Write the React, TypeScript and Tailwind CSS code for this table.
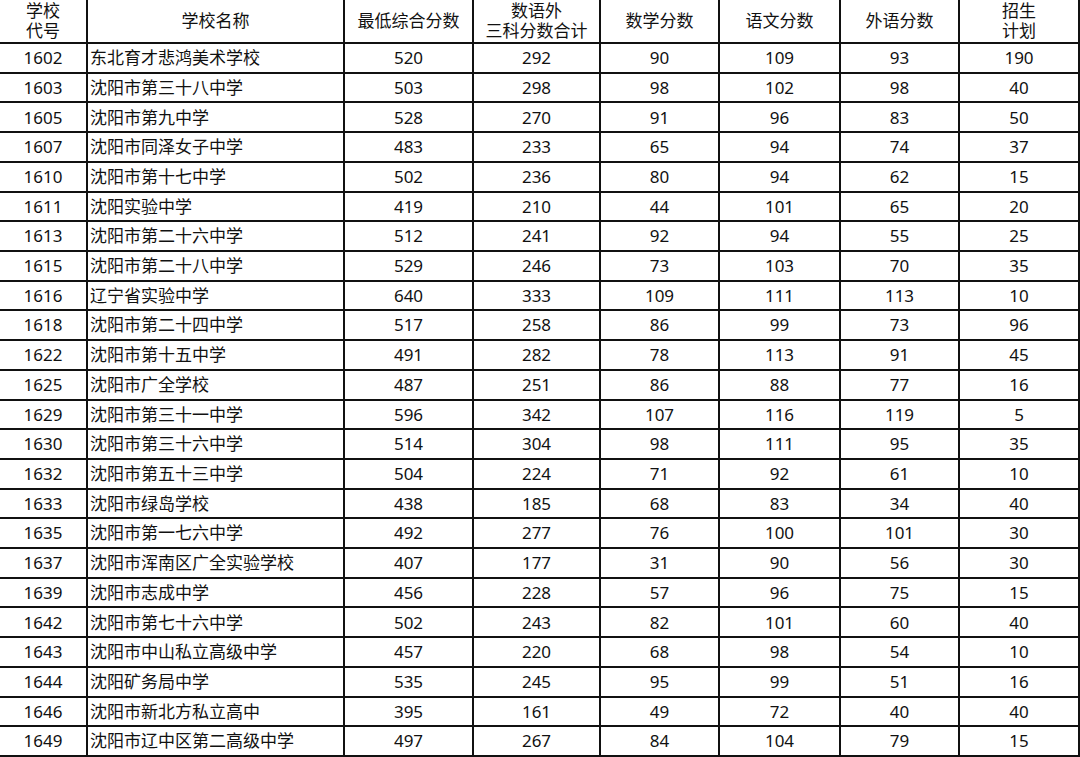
import React from "react";

const rows: [string, string, number, number, number, number, number, number][] = [
  ["1602", "东北育才悲鸿美术学校", 520, 292, 90, 109, 93, 190],
  ["1603", "沈阳市第三十八中学", 503, 298, 98, 102, 98, 40],
  ["1605", "沈阳市第九中学", 528, 270, 91, 96, 83, 50],
  ["1607", "沈阳市同泽女子中学", 483, 233, 65, 94, 74, 37],
  ["1610", "沈阳市第十七中学", 502, 236, 80, 94, 62, 15],
  ["1611", "沈阳实验中学", 419, 210, 44, 101, 65, 20],
  ["1613", "沈阳市第二十六中学", 512, 241, 92, 94, 55, 25],
  ["1615", "沈阳市第二十八中学", 529, 246, 73, 103, 70, 35],
  ["1616", "辽宁省实验中学", 640, 333, 109, 111, 113, 10],
  ["1618", "沈阳市第二十四中学", 517, 258, 86, 99, 73, 96],
  ["1622", "沈阳市第十五中学", 491, 282, 78, 113, 91, 45],
  ["1625", "沈阳市广全学校", 487, 251, 86, 88, 77, 16],
  ["1629", "沈阳市第三十一中学", 596, 342, 107, 116, 119, 5],
  ["1630", "沈阳市第三十六中学", 514, 304, 98, 111, 95, 35],
  ["1632", "沈阳市第五十三中学", 504, 224, 71, 92, 61, 10],
  ["1633", "沈阳市绿岛学校", 438, 185, 68, 83, 34, 40],
  ["1635", "沈阳市第一七六中学", 492, 277, 76, 100, 101, 30],
  ["1637", "沈阳市浑南区广全实验学校", 407, 177, 31, 90, 56, 30],
  ["1639", "沈阳市志成中学", 456, 228, 57, 96, 75, 15],
  ["1642", "沈阳市第七十六中学", 502, 243, 82, 101, 60, 40],
  ["1643", "沈阳市中山私立高级中学", 457, 220, 68, 98, 54, 10],
  ["1644", "沈阳矿务局中学", 535, 245, 95, 99, 51, 16],
  ["1646", "沈阳市新北方私立高中", 395, 161, 49, 72, 40, 40],
  ["1649", "沈阳市辽中区第二高级中学", 497, 267, 84, 104, 79, 15],
];

const cell = "bg-white flex items-center justify-center text-[#111]";
const two = "bg-white flex flex-col items-center justify-center text-[#111] leading-[20px]";

export default function App() {
  return (
    <div
      className="w-[1080px] h-[757px] bg-white overflow-hidden"
      style={{ fontFamily: '"Noto Sans", "Noto Sans CJK SC", sans-serif' }}
    >
      <div className="grid grid-cols-[86px_255px_127px_125px_117px_119px_117px_118px] grid-rows-[42px_repeat(24,1fr)] gap-[2px] bg-[#111] pr-[2px] pb-[2px] w-[1080px] h-[757px] text-[17px]">
        <div className={two}>
          <div className="h-[20px]">学校</div>
          <div className="h-[20px]">代号</div>
        </div>
        <div className={cell}>学校名称</div>
        <div className={cell}>最低综合分数</div>
        <div className={two}>
          <div className="h-[20px]">数语外</div>
          <div className="h-[20px]">三科分数合计</div>
        </div>
        <div className={cell}>数学分数</div>
        <div className={cell}>语文分数</div>
        <div className={cell}>外语分数</div>
        <div className={two}>
          <div className="h-[20px]">招生</div>
          <div className="h-[20px]">计划</div>
        </div>
        {rows.map((r) => (
          <React.Fragment key={r[0]}>
            <div className={cell}>{r[0]}</div>
            <div className="bg-white flex items-center pl-[2px] text-[#111]">{r[1]}</div>
            <div className={cell}>{r[2]}</div>
            <div className={cell}>{r[3]}</div>
            <div className={cell}>{r[4]}</div>
            <div className={cell}>{r[5]}</div>
            <div className={cell}>{r[6]}</div>
            <div className={cell}>{r[7]}</div>
          </React.Fragment>
        ))}
      </div>
    </div>
  );
}
